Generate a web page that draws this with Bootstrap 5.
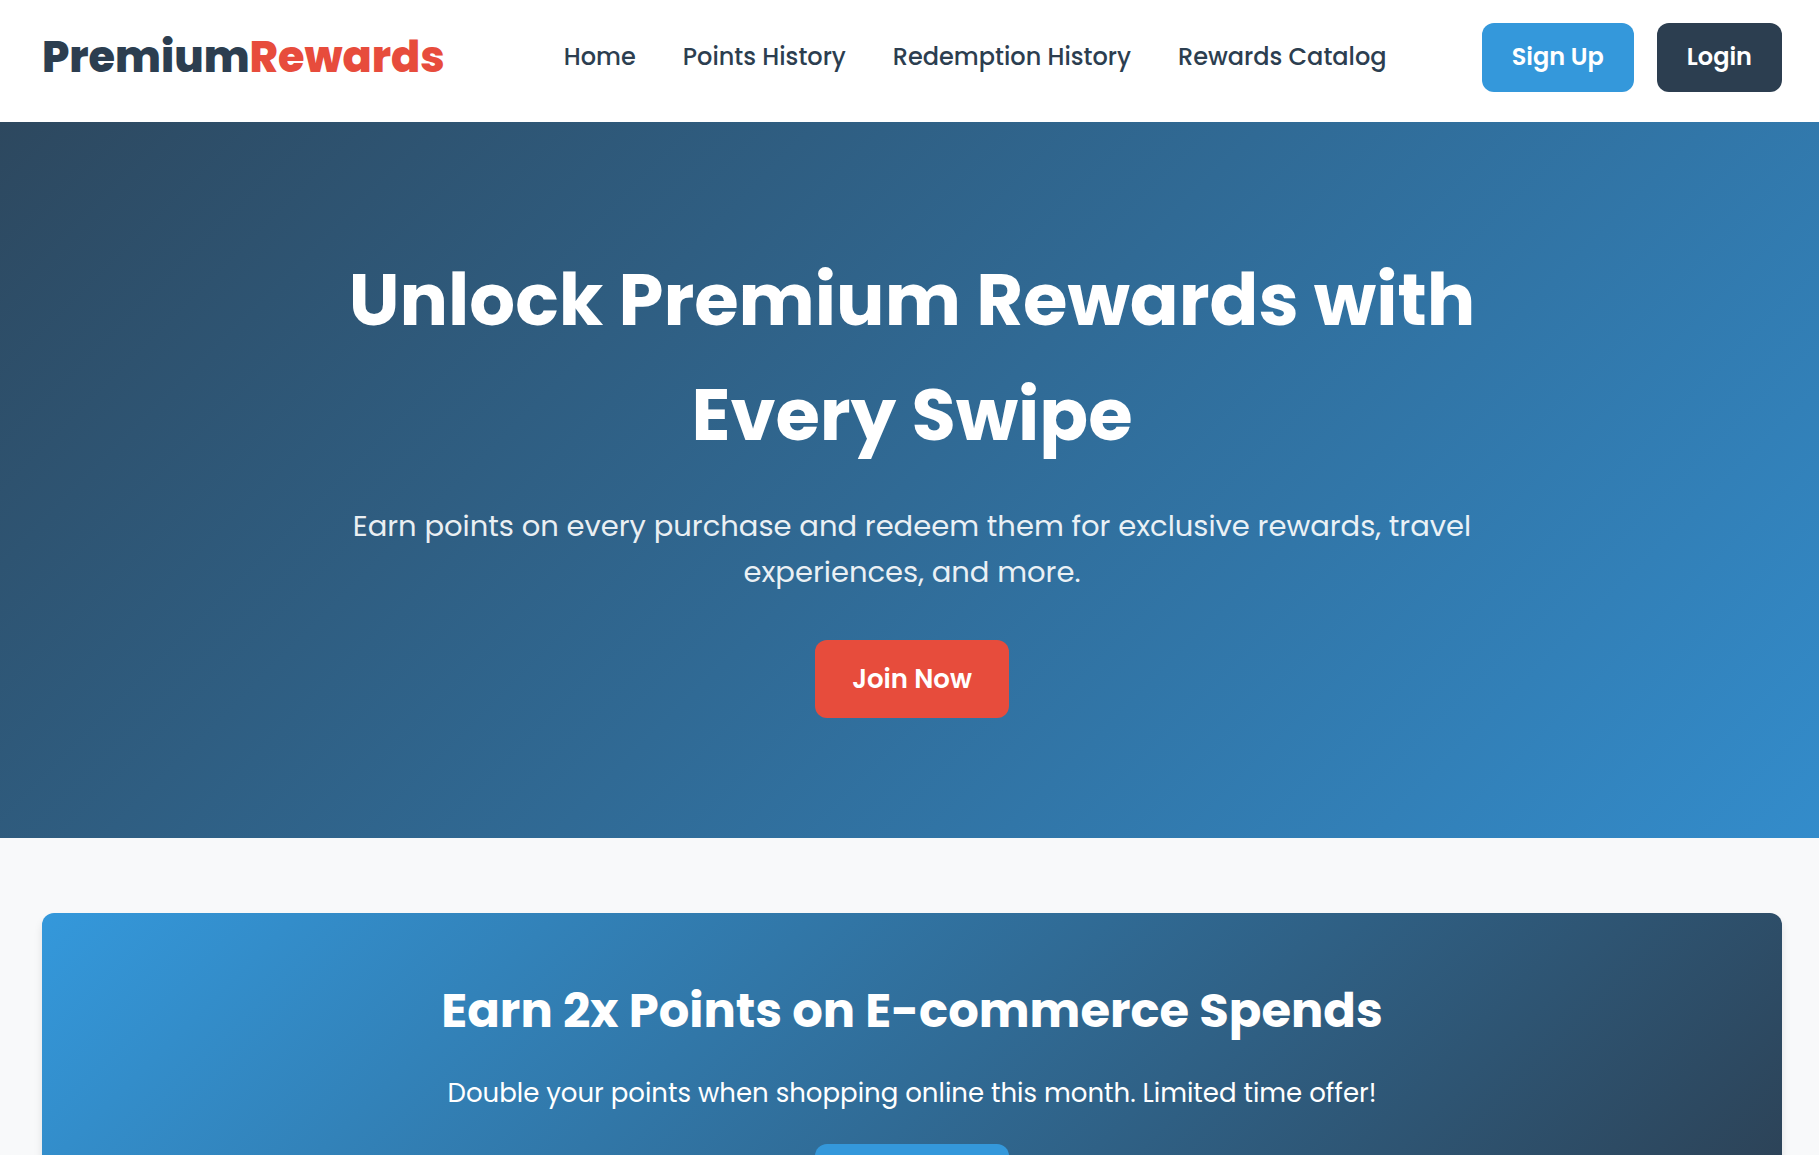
<!DOCTYPE html>
<html lang="en">
<head>
<meta charset="utf-8">
<meta name="viewport" content="width=device-width, initial-scale=1">
<title>PremiumRewards</title>
<link href="https://cdn.jsdelivr.net/npm/bootstrap@5.3.0/dist/css/bootstrap.min.css" rel="stylesheet">
<style>
:root { --navy: #2c3e50; --sky: #3498db; --coral: #e74c3c; }
body { font-family: Poppins, Inter, "Open Sans", sans-serif; background: #f8f9fa; color: var(--navy); line-height: 1.6; overflow-x: hidden; }
.page-gutter { padding-left: 42px; padding-right: 37px; }
.site-header { padding-top: 23px; padding-bottom: 30px; }
.site-brand { font-size: 43px; font-weight: 800; line-height: 68px; padding-bottom: 1px; color: var(--navy); text-decoration: none; }
.site-brand span { color: var(--coral); }
.site-links { gap: 47px; padding-bottom: 2px; }
.site-links .nav-link { padding: 0; font-size: 24px; font-weight: 500; line-height: 36px; color: var(--navy); }
.site-actions { gap: 23px; }
.action-btn { --bs-btn-color: #fff; --bs-btn-hover-color: #fff; --bs-btn-border-width: 0; --bs-btn-border-radius: 12px; --bs-btn-font-weight: 600; --bs-btn-font-size: 24px; --bs-btn-padding-x: 30px; --bs-btn-padding-y: 16px; line-height: 36px; padding-bottom: 17px; }
.action-btn-lg { --bs-btn-font-size: 26px; --bs-btn-padding-x: 37px; --bs-btn-padding-y: 18px; line-height: 42px; padding-bottom: 18px; }
.btn-sky { --bs-btn-bg: var(--sky); --bs-btn-hover-bg: #2980b9; }
.btn-navy { --bs-btn-bg: var(--navy); --bs-btn-hover-bg: #1f2d3a; }
.btn-coral { --bs-btn-bg: var(--coral); --bs-btn-hover-bg: #c0392b; }
.hero { padding-top: 120px; padding-bottom: 120px; background: linear-gradient(135deg, #2d485f, #338ccb); }
.hero-inner { max-width: 1200px; }
.hero h1 { font-size: 72px; font-weight: 700; line-height: 115px; margin-bottom: 31px; }
.hero p { font-size: 29px; line-height: 46px; margin-bottom: 45px; opacity: .9; }
.offers { padding-top: 75px; padding-bottom: 75px; }
.offer { padding: 60px; border-radius: 12px; background: linear-gradient(135deg, var(--sky), var(--navy)); box-shadow: 0 6px 9px rgba(0,0,0,.1); }
.offer h2 { font-size: 48px; font-weight: 700; line-height: 76px; margin-bottom: 23px; }
.offer p { font-size: 26px; line-height: 42px; margin-bottom: 30px; }
</style>
<script src="https://cdn.jsdelivr.net/npm/bootstrap@5.3.0/dist/js/bootstrap.bundle.min.js" defer></script>
</head>
<body>
<header class="site-header page-gutter bg-white d-flex flex-wrap align-items-center justify-content-between">
  <a class="site-brand" href="#">Premium<span>Rewards</span></a>
  <nav class="nav site-links ms-4" aria-label="Main">
    <a class="nav-link" href="#">Home</a>
    <a class="nav-link" href="#">Points History</a>
    <a class="nav-link" href="#">Redemption History</a>
    <a class="nav-link" href="#">Rewards Catalog</a>
  </nav>
  <div class="site-actions d-flex">
    <button type="button" class="btn action-btn btn-sky">Sign Up</button>
    <button type="button" class="btn action-btn btn-navy">Login</button>
  </div>
</header>
<main>
  <section class="hero page-gutter text-white text-center">
    <div class="hero-inner mx-auto">
      <h1>Unlock Premium Rewards with Every Swipe</h1>
      <p>Earn points on every purchase and redeem them for exclusive rewards, travel experiences, and more.</p>
      <button type="button" class="btn action-btn action-btn-lg btn-coral">Join Now</button>
    </div>
  </section>
  <section class="offers page-gutter">
    <div class="offer text-white text-center">
      <h2>Earn 2x Points on E-commerce Spends</h2>
      <p>Double your points when shopping online this month. Limited time offer!</p>
      <button type="button" class="btn action-btn action-btn-lg btn-sky">Join Now</button>
    </div>
  </section>
</main>
</body>
</html>
